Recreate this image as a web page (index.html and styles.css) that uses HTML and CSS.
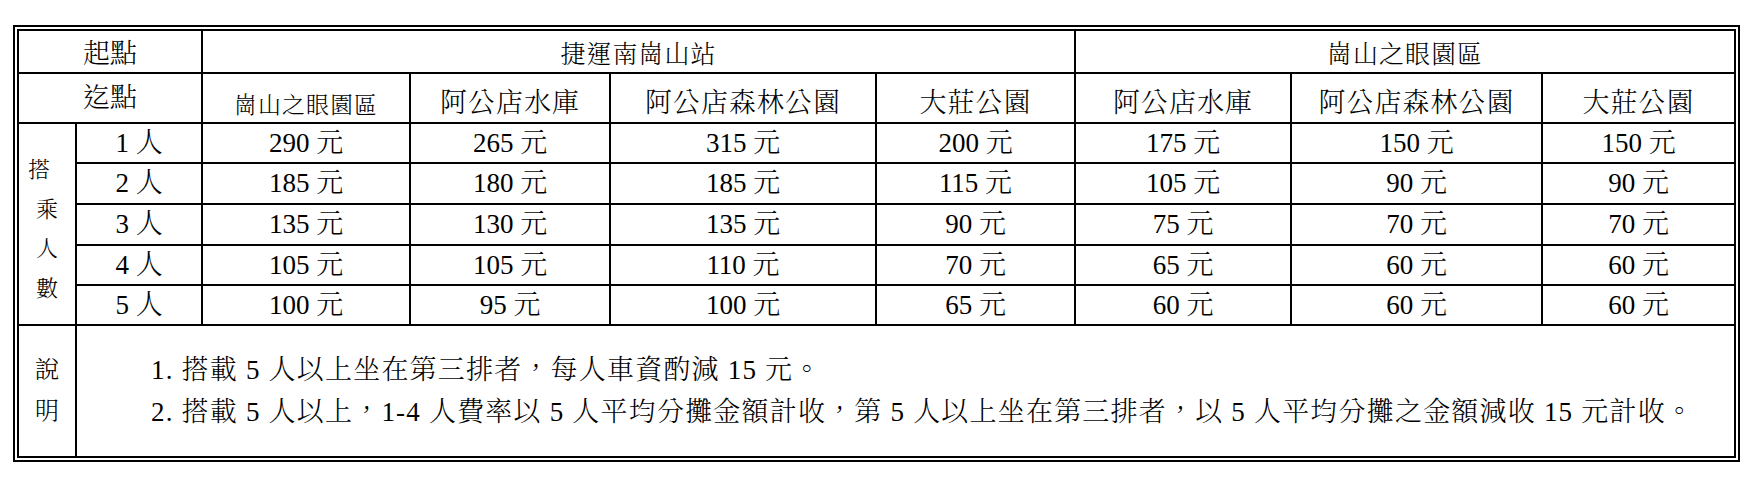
FILE: index.html
```html
<!DOCTYPE html>
<html lang="zh-Hant">
<head>
<meta charset="utf-8">
<title>計程車共乘費率表</title>
<link rel="stylesheet" href="styles.css">
</head>
<body>
<div class="fare">
  <div class="cell span2 origin">起點</div>
  <div class="cell span4 group">捷運南崗山站</div>
  <div class="cell span3 group last">崗山之眼園區</div>

  <div class="cell span2">迄點</div>
  <div class="cell dest small">崗山之眼園區</div>
  <div class="cell dest">阿公店水庫</div>
  <div class="cell dest">阿公店森林公園</div>
  <div class="cell dest">大莊公園</div>
  <div class="cell dest">阿公店水庫</div>
  <div class="cell dest">阿公店森林公園</div>
  <div class="cell dest last">大莊公園</div>

  <div class="cell riders"><span class="ch first">搭</span><span class="ch">乘</span><span class="ch">人</span><span class="ch">數</span></div>
  <div class="cell">1 人</div>
  <div class="cell">290 元</div>
  <div class="cell">265 元</div>
  <div class="cell">315 元</div>
  <div class="cell">200 元</div>
  <div class="cell">175 元</div>
  <div class="cell">150 元</div>
  <div class="cell last">150 元</div>

  <div class="cell">2 人</div>
  <div class="cell">185 元</div>
  <div class="cell">180 元</div>
  <div class="cell">185 元</div>
  <div class="cell">115 元</div>
  <div class="cell">105 元</div>
  <div class="cell">90 元</div>
  <div class="cell last">90 元</div>

  <div class="cell">3 人</div>
  <div class="cell">135 元</div>
  <div class="cell">130 元</div>
  <div class="cell">135 元</div>
  <div class="cell">90 元</div>
  <div class="cell">75 元</div>
  <div class="cell">70 元</div>
  <div class="cell last">70 元</div>

  <div class="cell">4 人</div>
  <div class="cell">105 元</div>
  <div class="cell">105 元</div>
  <div class="cell">110 元</div>
  <div class="cell">70 元</div>
  <div class="cell">65 元</div>
  <div class="cell">60 元</div>
  <div class="cell last">60 元</div>

  <div class="cell">5 人</div>
  <div class="cell">100 元</div>
  <div class="cell">95 元</div>
  <div class="cell">100 元</div>
  <div class="cell">65 元</div>
  <div class="cell">60 元</div>
  <div class="cell">60 元</div>
  <div class="cell last">60 元</div>

  <div class="cell end label"><span class="ch">說</span><span class="ch">明</span></div>
  <div class="cell end last span8 notes">
    <p>1. 搭載 5 人以上坐在第三排者，每人車資酌減 15 元。</p>
    <p>2. 搭載 5 人以上，1-4 人費率以 5 人平均分攤金額計收，第 5 人以上坐在第三排者，以 5 人平均分攤之金額減收 15 元計收。</p>
  </div>
</div>
</body>
</html>
```

FILE: styles.css
```css
* {
  box-sizing: border-box;
}

body {
  margin: 0;
  padding: 25px 0 0 13px;
  background: #fff;
  color: #000;
  font-family: "Liberation Serif", "Noto Serif CJK TC", "Noto Sans CJK TC", serif;
  font-weight: 300;
}

.fare {
  display: grid;
  width: 1727px;
  border: 6px double #000;
  grid-template-columns: 58px 126px 208px 200px 266px 199px 216px 251px 191px;
  grid-template-rows: 43px 50px 40px 41px 41px 40px 40px 130px;
  font-size: 27px;
}

.cell {
  display: flex;
  align-items: center;
  justify-content: center;
  border-right: 2px solid #000;
  border-bottom: 2px solid #000;
  line-height: 1;
  white-space: nowrap;
}

.cell.last {
  border-right: 0;
}

.cell.end {
  border-bottom: 0;
}

.span2 { grid-column: span 2; }
.span3 { grid-column: span 3; }
.span4 { grid-column: span 4; }
.span8 { grid-column: span 8; }

.origin {
  padding-top: 6px;
}

.group {
  font-size: 25px;
  letter-spacing: 1px;
  padding-top: 6px;
}

.dest {
  align-items: flex-end;
  padding-bottom: 5px;
  letter-spacing: 1px;
}

.dest.small {
  font-size: 23px;
}

.riders {
  grid-row: span 5;
  flex-direction: column;
  font-size: 22px;
  line-height: 39.5px;
  padding-top: 10px;
}

.riders .first {
  margin-right: 16px;
}

.label {
  flex-direction: column;
  font-size: 24px;
  line-height: 41px;
}

.ch {
  display: block;
}

.notes {
  flex-direction: column;
  align-items: flex-start;
  padding-left: 74px;
  letter-spacing: 1.2px;
  line-height: 42px;
}

.notes p {
  margin: 0;
}
```
